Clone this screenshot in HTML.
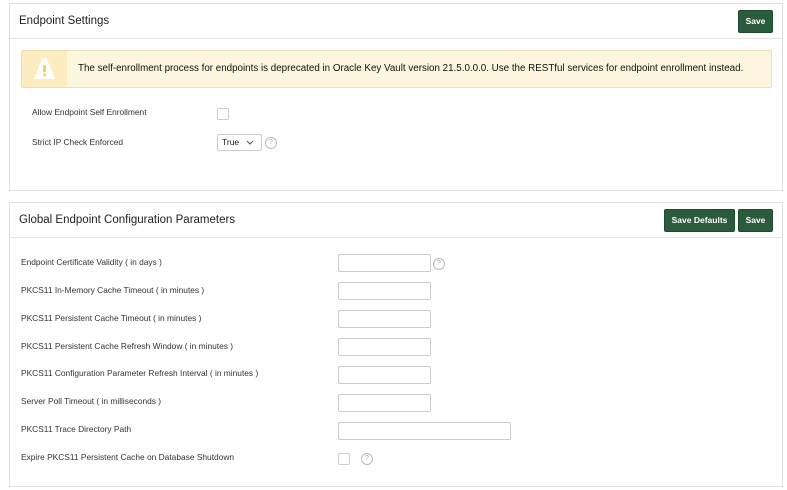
<!DOCTYPE html><html><head><style>
body{margin:0;width:787px;height:490px;background:#fff;font-family:"Liberation Sans",sans-serif;position:relative;overflow:hidden}
.a{position:absolute}
.panel{position:absolute;left:9px;width:772px;border:1px solid #e0e0e0;background:#fff}
.hdr{position:absolute;left:0;right:0;top:0;height:34px;border-bottom:1px solid #e6e6e6}
.title{position:absolute;left:9px;top:11px;font-size:11.5px;color:#222}
.btn{position:absolute;height:21px;background:#2b5b3c;border:1px solid #1e4a2e;border-radius:2px;color:#fff;font-size:8.5px;font-weight:bold;line-height:21px;text-align:center}
.lbl{position:absolute;font-size:8.4px;color:#333}
.inp{position:absolute;width:91px;height:16px;border:1px solid #ccc;border-radius:2px;left:338px}
.help{position:absolute;width:10px;height:10px;border:1px solid #bbb;border-radius:50%;font-size:7px;color:#aaa;text-align:center;line-height:10px}
.cb{position:absolute;width:10px;height:10px;border:1px solid #ccc;border-radius:2px}
</style></head><body>
<div class="panel" style="top:3px;height:186px">
<div class="hdr"><div class="title">Endpoint Settings</div></div>
<div class="btn" style="left:728px;top:6px;width:33px">Save</div>
</div>
<div class="a" style="left:21px;top:50px;width:749px;height:36px;background:#fdf6de;border:1px solid #ecdfb6;border-radius:2px">
<div class="a" style="left:0;top:0;width:45px;height:36px;background:#fcecc0"></div>
<svg class="a" style="left:11px;top:6px" width="23" height="23" viewBox="0 0 23 23"><path d="M9.5 1 H13.5 L22 22 H1 Z" fill="#fff"/><rect x="10.3" y="8" width="2.4" height="7" fill="#f5c842"/><rect x="10.3" y="16.5" width="2.4" height="2.4" fill="#f5c842"/></svg>
<div class="a" style="left:56px;top:12px;font-size:9.8px;color:#111">The self-enrollment process for endpoints is deprecated in Oracle Key Vault version 21.5.0.0.0. Use the RESTful services for endpoint enrollment instead.</div>
</div>
<div class="lbl" style="left:32px;top:107px">Allow Endpoint Self Enrollment</div>
<div class="cb" style="left:217px;top:108px"></div>
<div class="lbl" style="left:32px;top:137px">Strict IP Check Enforced</div>
<div class="a" style="left:217px;top:134px;width:43px;height:15px;border:1px solid #ccc;border-radius:2px;font-size:8.5px;line-height:15px;color:#222"><span style="margin-left:4px">True</span><svg class="a" style="left:28px;top:5px" width="8" height="5" viewBox="0 0 8 5"><path d="M1 1 L4 4 L7 1" fill="none" stroke="#555" stroke-width="1"/></svg></div>
<div class="help" style="left:265px;top:137px">?</div>

<div class="panel" style="top:202px;height:283px">
<div class="hdr"><div class="title">Global Endpoint Configuration Parameters</div></div>
<div class="btn" style="left:654px;top:6px;width:69px">Save Defaults</div>
<div class="btn" style="left:728px;top:6px;width:33px">Save</div>
</div>
<div class="lbl" style="left:21px;top:257px">Endpoint Certificate Validity ( in days )</div><div class="inp" style="top:254px"></div><div class="help" style="left:433px;top:258px">?</div>
<div class="lbl" style="left:21px;top:285px">PKCS11 In-Memory Cache Timeout ( in minutes )</div><div class="inp" style="top:282px"></div>
<div class="lbl" style="left:21px;top:313px">PKCS11 Persistent Cache Timeout ( in minutes )</div><div class="inp" style="top:310px"></div>
<div class="lbl" style="left:21px;top:341px">PKCS11 Persistent Cache Refresh Window ( in minutes )</div><div class="inp" style="top:338px"></div>
<div class="lbl" style="left:21px;top:368px">PKCS11 Configuration Parameter Refresh Interval ( in minutes )</div><div class="inp" style="top:366px"></div>
<div class="lbl" style="left:21px;top:396px">Server Poll Timeout ( in milliseconds )</div><div class="inp" style="top:394px"></div>
<div class="lbl" style="left:21px;top:424px">PKCS11 Trace Directory Path</div><div class="inp" style="top:422px;width:171px"></div>
<div class="lbl" style="left:21px;top:452px">Expire PKCS11 Persistent Cache on Database Shutdown</div>
<div class="cb" style="left:338px;top:453px"></div><div class="help" style="left:361px;top:453px">?</div>
</body></html>
